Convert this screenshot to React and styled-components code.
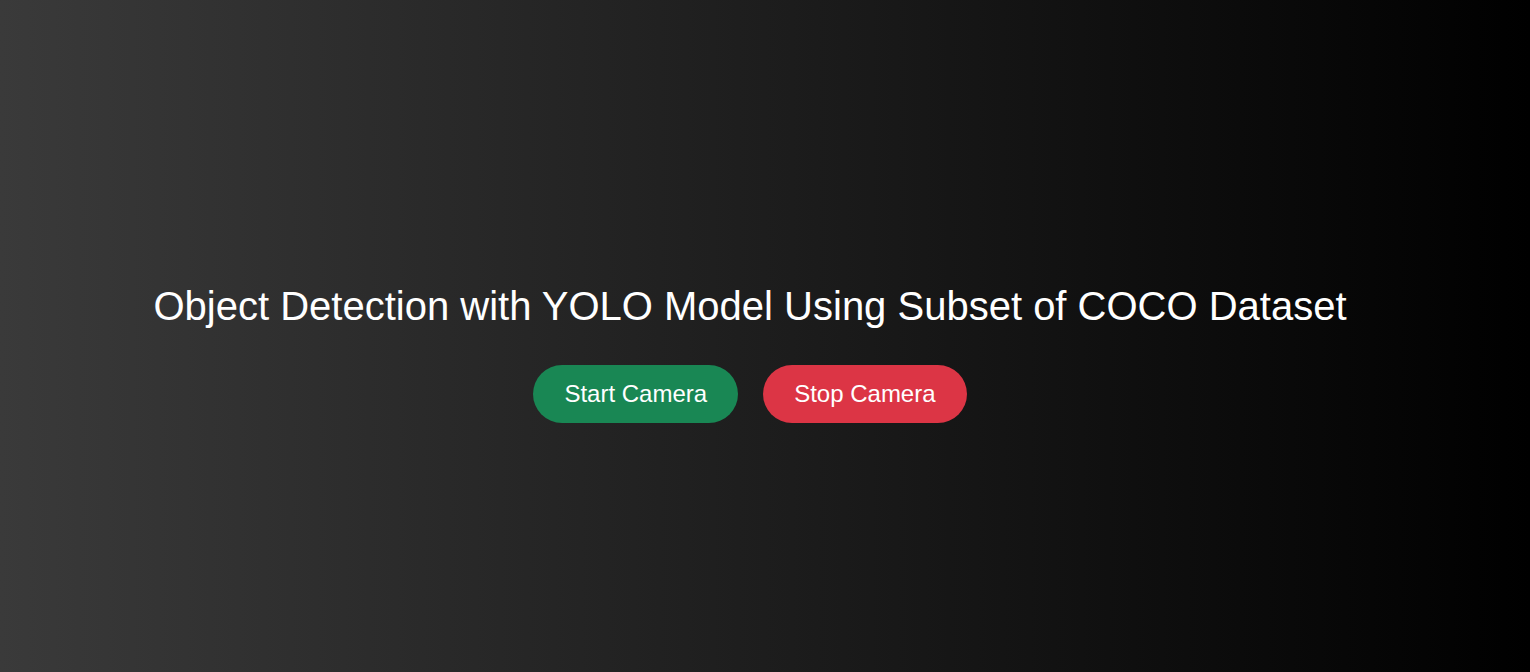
import React from "react";
import styled, { createGlobalStyle } from "styled-components";

const GlobalStyle = createGlobalStyle`
  html, body {
    margin: 0;
    padding: 0;
  }
  body {
    font-family: "Liberation Sans", Arial, sans-serif;
    background: #000;
  }
`;

const App = () => {
  return (
    <>
      <GlobalStyle />
      <Container>
        <Title>Object Detection with YOLO Model Using Subset of COCO Dataset</Title>
        <ButtonRow>
          <Button bg="#198754">Start Camera</Button>
          <Button bg="#dc3545">Stop Camera</Button>
        </ButtonRow>
      </Container>
    </>
  );
};

export default App;

const Container = styled.div`
  width: 100%;
  height: 100vh;
  box-sizing: border-box;
  padding: 34px 30px 0 0;
  background: linear-gradient(to right, #3a3a3a, #000000);
  display: flex;
  flex-direction: column;
  align-items: center;
  justify-content: center;
  color: white;
`;

const Title = styled.h1`
  margin: 0;
  font-size: 40px;
  font-weight: normal;
  line-height: 46px;
`;

const ButtonRow = styled.div`
  display: flex;
  gap: 25px;
  margin-top: 36px;
`;

const Button = styled.button`
  border: none;
  outline: none;
  background-color: ${({ bg }) => bg};
  color: white;
  font-family: "Liberation Sans", Arial, sans-serif;
  font-size: 24px;
  line-height: 28px;
  padding: 15px 31px;
  border-radius: 29px;
  cursor: pointer;
`;
